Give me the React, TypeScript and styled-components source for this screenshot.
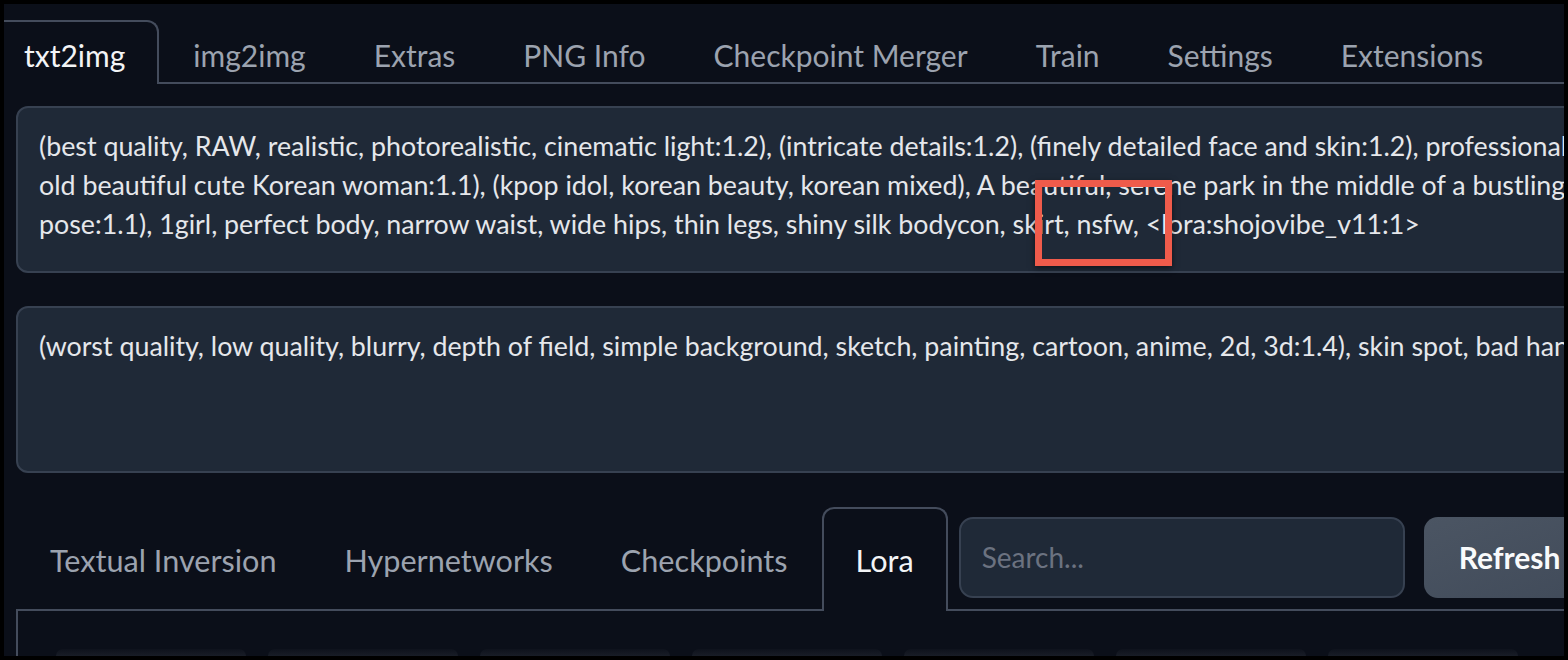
import * as React from "react";
import styled, { createGlobalStyle } from "styled-components";

const LINE = "#444c5c";
const BG = "#0b0f19";
const FIELD = "#1f2937";
const FIELD_BORDER = "#374151";

const GlobalStyle = createGlobalStyle`
  html, body {
    margin: 0;
    padding: 0;
    background: #000;
  }
  body {
    width: 1568px;
    height: 660px;
    overflow: hidden;
  }
`;

const Frame = styled.div`
  width: 1568px;
  height: 660px;
  box-sizing: border-box;
  padding: 4px;
  background: #000;
`;

const Screen = styled.div`
  position: relative;
  width: 100%;
  height: 100%;
  overflow: hidden;
  background: ${BG};
  font-family: Lato, "Noto Sans", sans-serif;
  display: flex;
  flex-direction: column;
`;

const MainTabs = styled.nav`
  display: flex;
  margin: 16px 0 0 -14px;
  border-bottom: 2px solid ${LINE};
`;

const Tab = styled.div<{ $active?: boolean; $h: number; $size: number; $lift: number; $pad: number }>`
  box-sizing: border-box;
  height: ${(p) => p.$h}px;
  padding: ${(p) => p.$lift}px ${(p) => p.$pad}px 0;
  display: flex;
  align-items: center;
  flex-shrink: 0;
  font-size: ${(p) => p.$size}px;
  white-space: nowrap;
  color: ${(p) => (p.$active ? "#f3f4f6" : "#9ca3af")};
  border: 2px solid ${(p) => (p.$active ? LINE : "transparent")};
  border-bottom: none;
  border-radius: 12px 12px 0 0;
  background: ${(p) => (p.$active ? BG : "transparent")};
  margin-bottom: -2px;
  position: relative;
  z-index: 1;
`;

const PromptBox = styled.div<{ $top: number }>`
  box-sizing: border-box;
  margin: ${(p) => p.$top}px 0 0 12px;
  width: 1600px;
  height: 167px;
  flex-shrink: 0;
  padding: 19px 21px;
  background: ${FIELD};
  border: 2px solid ${FIELD_BORDER};
  border-radius: 12px;
  color: #e5e7eb;
  font-size: 26.8px;
  line-height: 39px;
  white-space: nowrap;
  overflow: hidden;
`;

const NetworkTabs = styled.nav`
  display: flex;
  align-items: center;
  margin: 34px 0 0 12px;
  border-bottom: 2px solid ${LINE};
`;

const SearchField = styled.div`
  box-sizing: border-box;
  width: 446px;
  height: 81px;
  margin: 0 0 2px 11px;
  padding: 0 21px;
  display: flex;
  align-items: center;
  flex-shrink: 0;
  background: ${FIELD};
  border: 2px solid ${FIELD_BORDER};
  border-radius: 14px;
  color: #6b7280;
  font-size: 28px;
`;

const RefreshButton = styled.div`
  box-sizing: border-box;
  width: 200px;
  height: 81px;
  margin: 0 0 2px 19px;
  padding: 0 35px;
  display: flex;
  align-items: center;
  flex-shrink: 0;
  background: linear-gradient(to bottom right, #4b5563, #404a59);
  border-radius: 14px;
  color: #f9fafb;
  font-size: 30px;
  font-weight: 700;
`;

const Panel = styled.div`
  flex: 1;
  margin-left: 12px;
  border-left: 2px solid ${LINE};
  display: flex;
  align-items: flex-end;
  gap: 22px;
  padding: 0 0 0 38px;
  overflow: hidden;
`;

const CardTop = styled.div`
  width: 190px;
  height: 7px;
  flex-shrink: 0;
  border-radius: 10px 10px 0 0;
  background: linear-gradient(to bottom, rgba(120, 128, 140, 0.03), rgba(120, 128, 140, 0.12));
`;

const Callout = styled.div`
  position: absolute;
  left: 1031px;
  top: 176px;
  width: 137px;
  height: 86px;
  box-sizing: border-box;
  border: 7px solid #ef5b4b;
  box-shadow: 0 2px 6px rgba(0, 0, 0, 0.55);
  pointer-events: none;
`;

const mainTabs = [
  "txt2img",
  "img2img",
  "Extras",
  "PNG Info",
  "Checkpoint Merger",
  "Train",
  "Settings",
  "Extensions",
];

const networkTabs = ["Textual Inversion", "Hypernetworks", "Checkpoints", "Lora"];

const positive = [
  "(best quality, RAW, realistic, photorealistic, cinematic light:1.2), (intricate details:1.2), (finely detailed face and skin:1.2), professional lighting, (21 years",
  "old beautiful cute Korean woman:1.1), (kpop idol, korean beauty, korean mixed), A beautiful, serene park in the middle of a bustling city, (dynamic",
  "pose:1.1), 1girl, perfect body, narrow waist, wide hips, thin legs, shiny silk bodycon, skirt, nsfw, <lora:shojovibe_v11:1>",
];

const negative = [
  "(worst quality, low quality, blurry, depth of field, simple background, sketch, painting, cartoon, anime, 2d, 3d:1.4), skin spot, bad hands, bad anatomy",
];

export default function App() {
  return (
    <Frame>
      <GlobalStyle />
      <Screen>
        <MainTabs>
          {mainTabs.map((t, i) => (
            <Tab key={t} $h={64} $size={30} $lift={4} $pad={32} $active={i === 0}>
              {t}
            </Tab>
          ))}
        </MainTabs>

        <PromptBox $top={22}>
          {positive.map((l) => (
            <div key={l}>{l}</div>
          ))}
        </PromptBox>

        <PromptBox $top={33}>
          {negative.map((l) => (
            <div key={l}>{l}</div>
          ))}
        </PromptBox>

        <NetworkTabs>
          {networkTabs.map((t) => (
            <Tab key={t} $h={104} $size={30.6} $lift={0} $pad={32} $active={t === "Lora"}>
              {t}
            </Tab>
          ))}
          <SearchField>Search...</SearchField>
          <RefreshButton>Refresh</RefreshButton>
        </NetworkTabs>

        <Panel>
          {[0, 1, 2, 3, 4, 5, 6].map((c) => (
            <CardTop key={c} />
          ))}
        </Panel>

        <Callout />
      </Screen>
    </Frame>
  );
}
